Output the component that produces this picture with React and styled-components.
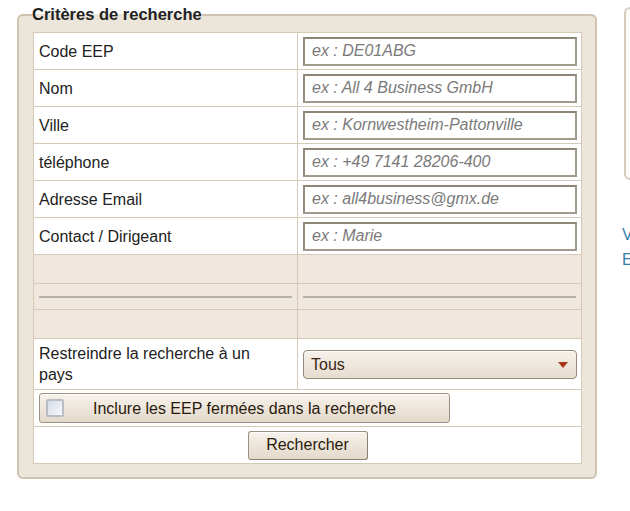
import React from 'react';
import styled, { createGlobalStyle } from 'styled-components';

const GlobalStyle = createGlobalStyle`
	html, body {
		margin: 0;
		padding: 0;
		background: #fff;
		overflow: hidden;
	}
	body {
		font-family: "Liberation Sans", Arial, sans-serif;
		font-size: 16px;
		color: #222;
	}
`;

const Page = styled.div`
	display: flex;
	align-items: flex-start;
	gap: 25px;
	padding-left: 17px;
	width: 900px;
`;

const Fieldset = styled.fieldset`
	box-sizing: border-box;
	width: 580px;
	margin: 5px 0 0 0;
	padding: 8px 14px 13px 14px;
	background: #ece5da;
	border: 2px solid #d0c3b1;
	border-radius: 6px;
	min-width: 0;
`;

const Legend = styled.legend`
	padding: 0;
	margin-left: -1px;
	font-size: 16.5px;
	font-weight: bold;
	color: #222;
	line-height: 19px;
`;

const Table = styled.table`
	width: 549px;
	border-collapse: collapse;
	border: 1px solid #d2c4b2;
	table-layout: fixed;
`;

const Row = styled.tr`
	background: ${(p) => (p.$blank ? '#f0e8de' : '#fff')};
	height: ${(p) => p.$h}px;
`;

const Cell = styled.td`
	border: 1px solid #d6c9b8;
	padding: 0 ${(p) => (p.$label ? '22px' : '5px')} 0 5px;
	vertical-align: middle;
	text-align: ${(p) => (p.$center ? 'center' : 'left')};
	line-height: 21px;
`;

const LabelCol = styled.col`
	width: 264px;
`;

const Input = styled.input`
	box-sizing: border-box;
	display: block;
	width: 274px;
	height: 29px;
	margin: 0;
	padding: 0 7px;
	font-family: "Liberation Sans", Arial, sans-serif;
	font-size: 16px;
	color: #333;
	background: #fff;
	border: 2px solid #a29a8c;
	border-top-color: #8e8576;
	border-left-color: #958c7d;
	outline: none;

	&::placeholder {
		color: #7a7a7a;
		font-style: italic;
	}
`;

const Rule = styled.div`
	height: 2px;
	background: #b5b2ad;
	margin: 0;
`;

const SelectBox = styled.div`
	box-sizing: border-box;
	width: 274px;
	height: 29px;
	display: flex;
	align-items: center;
	justify-content: space-between;
	padding: 0 8px 0 7px;
	border: 1px solid #968b7b;
	border-radius: 4px;
	background: linear-gradient(#f6f1ea, #e6ddcf);
	box-shadow: inset 0 1px 0 #fff;
	color: #3b2415;
	font-size: 16px;
`;

const Arrow = styled.span`
	width: 0;
	height: 0;
	border-left: 5px solid transparent;
	border-right: 5px solid transparent;
	border-top: 6px solid #a8361a;
	margin-top: 2px;
`;

const ToggleButton = styled.label`
	box-sizing: border-box;
	display: flex;
	align-items: center;
	width: 411px;
	height: 30px;
	padding: 0 6px;
	border: 1px solid #9d9282;
	border-radius: 3px;
	background: linear-gradient(#f7f2eb, #e3d9cb);
	box-shadow: inset 0 1px 0 #fff;
	color: #2b1a0c;
	font-size: 16px;
	cursor: pointer;
`;

const Check = styled.span`
	box-sizing: border-box;
	flex: none;
	width: 18px;
	height: 18px;
	border: 2px solid #b9bcc2;
	border-radius: 2px;
	background: linear-gradient(135deg, #d5dbe5, #f7f9fc);
	margin-right: 29px;
`;

const Button = styled.button`
	box-sizing: border-box;
	width: 120px;
	height: 29px;
	margin: 0 auto;
	padding: 0;
	display: block;
	border: 1px solid #9d9282;
	border-right-color: #8a7f70;
	border-bottom-color: #8a7f70;
	border-radius: 3px;
	background: linear-gradient(#f7f2eb, #e3d9cb);
	box-shadow: inset 0 1px 0 #fff;
	color: #2b1a0c;
	font-family: "Liberation Sans", Arial, sans-serif;
	font-size: 16px;
	cursor: pointer;
`;

const Sidebar = styled.div`
	display: flex;
	flex-direction: column;
	width: 240px;
	padding-top: 7px;
`;

const InfoBox = styled.div`
	height: 173px;
	margin-left: 2px;
	border: 2px solid #d6cbbb;
	border-radius: 6px;
	background: #fcfbf9;
	box-sizing: border-box;
`;

const Links = styled.div`
	margin-top: 42px;
	display: flex;
	flex-direction: column;
	line-height: 25px;
`;

const Link = styled.a`
	color: #3580ab;
	text-decoration: none;
	white-space: nowrap;
`;

const fields = [
	{ label: 'Code EEP', placeholder: 'ex : DE01ABG' },
	{ label: 'Nom', placeholder: 'ex : All 4 Business GmbH' },
	{ label: 'Ville', placeholder: 'ex : Kornwestheim-Pattonville' },
	{ label: 'téléphone', placeholder: 'ex : +49 7141 28206-400' },
	{ label: 'Adresse Email', placeholder: 'ex : all4business@gmx.de' },
	{ label: 'Contact / Dirigeant', placeholder: 'ex : Marie' },
];

export default function App() {
	return (
		<>
			<GlobalStyle />
			<Page>
				<Fieldset>
					<Legend>Critères de recherche</Legend>
					<Table>
						<colgroup>
							<LabelCol />
							<col />
						</colgroup>
						<tbody>
							{fields.map((f) => (
								<Row key={f.label} $h={37}>
									<Cell $label>{f.label}</Cell>
									<Cell>
										<Input placeholder={f.placeholder} />
									</Cell>
								</Row>
							))}
							<Row $blank $h={29}>
								<Cell />
								<Cell />
							</Row>
							<Row $blank $h={26}>
								<Cell><Rule /></Cell>
								<Cell><Rule /></Cell>
							</Row>
							<Row $blank $h={29}>
								<Cell />
								<Cell />
							</Row>
							<Row $h={51}>
								<Cell $label>Restreindre la recherche à un pays</Cell>
								<Cell>
									<SelectBox>
										<span>Tous</span>
										<Arrow />
									</SelectBox>
								</Cell>
							</Row>
							<Row $h={37}>
								<Cell colSpan={2}>
									<ToggleButton>
										<Check />
										Inclure les EEP fermées dans la recherche
									</ToggleButton>
								</Cell>
							</Row>
							<Row $h={37}>
								<Cell colSpan={2} $center>
									<Button>Rechercher</Button>
								</Cell>
							</Row>
						</tbody>
					</Table>
				</Fieldset>
				<Sidebar>
					<InfoBox />
					<Links>
						<Link href="#">Voir la carte des EEP</Link>
						<Link href="#">Exporter les résultats</Link>
					</Links>
				</Sidebar>
			</Page>
		</>
	);
}
